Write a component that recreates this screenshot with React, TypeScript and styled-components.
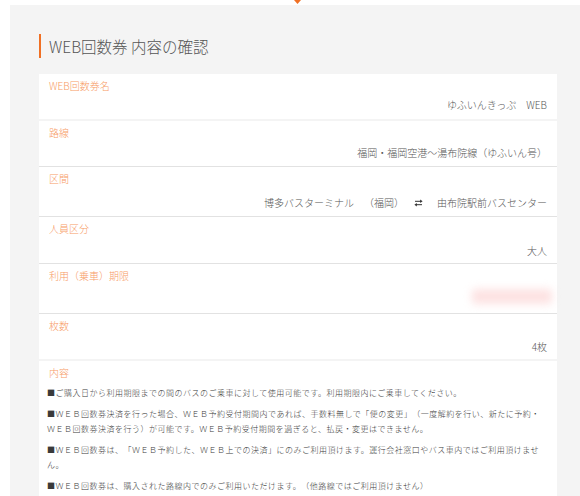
import React from "react";
import styled, { createGlobalStyle } from "styled-components";

const Global = createGlobalStyle`
  html, body {
    margin: 0;
    padding: 0;
    background: #fff;
  }
  body {
    font-family: "Noto Sans CJK JP", "Noto Sans", sans-serif;
    color: #555;
    text-spacing-trim: space-all;
  }
`;

const Page = styled.div`
  width: 580px;
  height: 496px;
  overflow: hidden;
`;

const TopStrip = styled.div`
  height: 5px;
  display: flex;
  align-items: flex-start;
  padding-left: 294px;
`;

const Panel = styled.div`
  margin-left: 10px;
  min-height: 491px;
  background: #f4f4f4;
  padding: 29px 23px 0 29px;
`;

const Heading = styled.h2`
  margin: 0 0 16px;
  height: 24px;
  display: flex;
  align-items: center;
  border-left: 2px solid #f07024;
  padding-left: 8px;
  font-size: 15.5px;
  font-weight: 300;
  color: #555;
`;

const Card = styled.div`
  display: flex;
  flex-direction: column;
  gap: 2px;
`;

const Section = styled.div`
  background: #fff;
`;

const Row = styled.div<{ $h?: number }>`
  box-sizing: border-box;
  height: ${(p) => (p.$h ? `${p.$h}px` : "auto")};
  padding: 5px 10px 0;
  display: flex;
  flex-direction: column;

  & + & {
    border-top: 1px solid #e2e2e2;
  }
`;

const Label = styled.div`
  font-size: 10px;
  line-height: 14px;
  font-weight: 300;
  color: #f79a64;
`;

const Value = styled.div<{ $mt: number }>`
  margin-top: ${(p) => p.$mt}px;
  display: flex;
  justify-content: flex-end;
  align-items: center;
  font-size: 10px;
  line-height: 14px;
  font-weight: 300;
  color: #555;
  white-space: nowrap;
`;

const Swap = styled.svg`
  width: 9px;
  height: 8px;
  margin: 0 14px 0 10px;
  flex: none;
`;

const Masked = styled.div`
  width: 80px;
  height: 15px;
  margin: -1px -5px -1px 0;
  border-radius: 3px;
  background: #fde2e2;
  filter: blur(4px);
`;

const Notes = styled.div`
  margin: 5px 0 0 -2px;
`;

const Note = styled.p`
  margin: 0 0 6px;
  font-size: 8px;
  letter-spacing: 0.5px;
  line-height: 15px;
  font-weight: 300;
  color: #3a3a3a;
`;

const notes = [
  "■ご購入日から利用期限までの間のバスのご乗車に対して使用可能です。利用期限内にご乗車してください。",
  "■ＷＥＢ回数券決済を行った場合、ＷＥＢ予約受付期間内であれば、手数料無しで「便の変更」（一度解約を行い、新たに予約・ＷＥＢ回数券決済を行う）が可能です。ＷＥＢ予約受付期間を過ぎると、払戻・変更はできません。",
  "■ＷＥＢ回数券は、「ＷＥＢ予約した、ＷＥＢ上での決済」にのみご利用頂けます。運行会社窓口やバス車内ではご利用頂けません。",
  "■ＷＥＢ回数券は、購入された路線内でのみご利用いただけます。（他路線ではご利用頂けません）",
];

export default function App() {
  return (
    <Page>
      <Global />
      <TopStrip>
        <svg width="7" height="4" viewBox="0 0 7 4">
          <polygon points="0,0 7,0 3.5,4" fill="#f07024" />
        </svg>
      </TopStrip>
      <Panel>
        <Heading>WEB回数券 内容の確認</Heading>
        <Card>
          <Section>
            <Row $h={45}>
              <Label>WEB回数券名</Label>
              <Value $mt={5}>ゆふいんきっぷ　WEB</Value>
            </Row>
          </Section>
          <Section>
            <Row $h={45}>
              <Label>路線</Label>
              <Value $mt={6}>福岡・福岡空港〜湯布院線（ゆふいん号）</Value>
            </Row>
            <Row $h={50}>
              <Label>区間</Label>
              <Value $mt={10}>
                博多バスターミナル　（福岡）
                <Swap viewBox="0 0 9 8">
                  <path d="M1 2.3H7" stroke="#333" strokeWidth="1" />
                  <polygon points="6.2,0.6 8.6,2.3 6.2,4" fill="#333" />
                  <path d="M2 5.7H8" stroke="#333" strokeWidth="1" />
                  <polygon points="2.8,4 0.4,5.7 2.8,7.4" fill="#333" />
                </Swap>
                由布院駅前バスセンター
              </Value>
            </Row>
            <Row $h={47}>
              <Label>人員区分</Label>
              <Value $mt={8}>大人</Value>
            </Row>
            <Row $h={50}>
              <Label>利用（乗車）期限</Label>
              <Value $mt={7}>
                <Masked />
              </Value>
            </Row>
            <Row $h={46}>
              <Label>枚数</Label>
              <Value $mt={7}>4枚</Value>
            </Row>
          </Section>
          <Section>
            <Row>
              <Label>内容</Label>
              <Notes>
                {notes.map((n) => (
                  <Note key={n}>{n}</Note>
                ))}
              </Notes>
            </Row>
          </Section>
        </Card>
      </Panel>
    </Page>
  );
}
